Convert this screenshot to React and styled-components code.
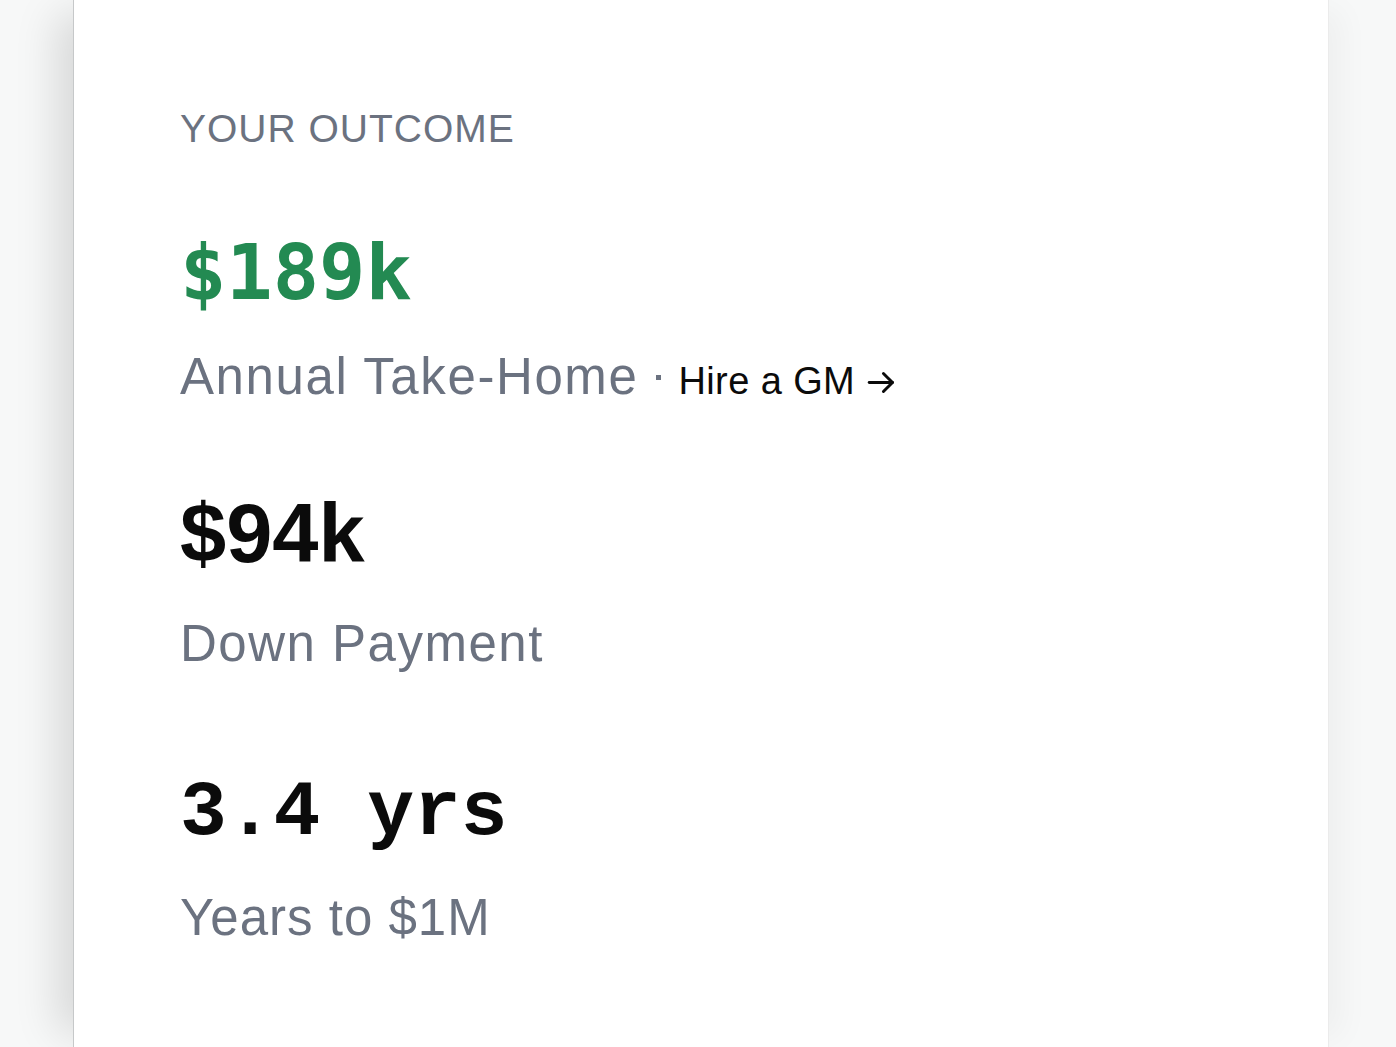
import React from "react";
import styled, { createGlobalStyle } from "styled-components";

const Global = createGlobalStyle`
  html, body { margin: 0; padding: 0; background: #f7f8f8; }
  body { font-family: "Liberation Sans", Arial, sans-serif; }
`;

const Page = styled.div`
  height: 1047px;
  overflow: hidden;
  display: flex;
  justify-content: flex-start;
  padding-left: 73px;
  box-sizing: border-box;
  background: #f7f8f8;
`;

const Card = styled.section`
  width: 1256px;
  height: 1047px;
  background: #ffffff;
  border-left: 1px solid #c6c8c9;
  border-right: 1px solid #ebebeb;
  box-sizing: border-box;
  box-shadow: -30px 0 40px -14px rgba(0, 0, 0, 0.13), 22px 0 30px -10px rgba(0, 0, 0, 0.04);
  padding: 106px 0 0 106px;
  display: flex;
  flex-direction: column;
`;

const Eyebrow = styled.div`
  font-size: 39px;
  letter-spacing: 1px;
  color: #6b7280;
  line-height: 46px;
`;

const Stat = styled.div`
  display: flex;
  flex-direction: column;
  margin-top: ${(p) => p.$gap}px;
`;

const Value = styled.div`
  font-weight: 700;
  color: ${(p) => p.$color || "#0b0b0b"};
  font-family: ${(p) =>
    p.$kind === "mono"
      ? `"DejaVu Sans Mono", monospace`
      : p.$kind === "courier"
      ? `"Liberation Mono", "Courier New", monospace`
      : `"Liberation Sans", Arial, sans-serif`};
  font-size: ${(p) => p.$size}px;
  letter-spacing: ${(p) => p.$spacing || 0}px;
  line-height: 1;
`;

const Label = styled.div`
  display: flex;
  align-items: baseline;
  margin-top: ${(p) => p.$gap}px;
  font-size: 51px;
  letter-spacing: ${(p) => p.$spacing ?? 1.3}px;
  color: #6b7280;
  line-height: 1;
`;

const Dot = styled.span`
  display: inline-block;
  width: 5px;
  height: 5px;
  background: #6b7280;
  margin: 0 17px 0 18px;
  transform: translateY(-14px);
`;

const Link = styled.a`
  color: #0b0b0b;
  font-size: 38px;
  letter-spacing: 0.4px;
  text-decoration: none;
  display: inline-flex;
  align-items: center;
  gap: 11px;
`;

const Arrow = () => (
  <svg width="31" height="31" viewBox="0 0 24 24" fill="none" stroke="#0b0b0b" strokeWidth="2.3" strokeLinecap="round" strokeLinejoin="round" style={{ transform: "translateY(1px)" }}>
    <path d="M2.5 12h18" />
    <path d="M13.5 5l7 7-7 7" />
  </svg>
);

export default function App() {
  return (
    <>
      <Global />
      <Page>
        <Card>
          <Eyebrow>YOUR OUTCOME</Eyebrow>
          <Stat $gap={82}>
            <Value $kind="mono" $size={77} $color="#238a52">$189k</Value>
            <Label $gap={40} $spacing={1.6}>
              Annual Take-Home
              <Dot />
              <Link href="#">
                Hire a GM <Arrow />
              </Link>
            </Label>
          </Stat>
          <Stat $gap={90}>
            <Value $size={83}>$94k</Value>
            <Label $gap={43} $spacing={1.5}>Down Payment</Label>
          </Stat>
          <Stat $gap={105}>
            <Value $kind="courier" $size={78} $spacing={0}>3.4 yrs</Value>
            <Label $gap={40} $spacing={1}>Years to $1M</Label>
          </Stat>
        </Card>
      </Page>
    </>
  );
}
